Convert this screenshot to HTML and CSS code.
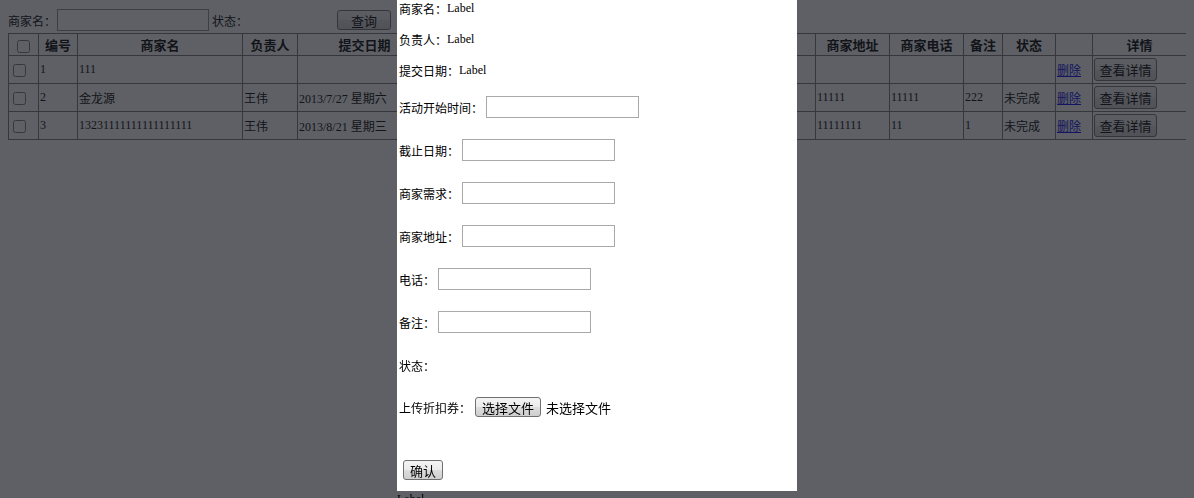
FILE: index.html
```html
<!DOCTYPE html>
<html lang="zh-CN">
<head>
<meta charset="utf-8">
<title>商家管理</title>
<link rel="stylesheet" href="styles.css">
</head>
<body>
<div class="page">
  <div class="toolbar">
    <span class="lbl">商家名：</span><input class="search" type="text"><span class="lbl status-lbl">状态：</span><button class="btn btn-query">查询</button>
  </div>
  <table class="grid">
    <colgroup>
      <col class="c-cb"><col class="c-no"><col class="c-name"><col class="c-owner"><col class="c-date"><col class="c-mid"><col class="c-mid"><col class="c-mid"><col class="c-addr"><col class="c-addr"><col class="c-note"><col class="c-state"><col class="c-del"><col class="c-detail">
    </colgroup>
    <thead>
      <tr>
        <th><input type="checkbox"></th><th>编号</th><th>商家名</th><th>负责人</th><th>提交日期</th><th>活动开始时间</th><th>截止日期</th><th>商家需求</th><th>商家地址</th><th>商家电话</th><th>备注</th><th>状态</th><th></th><th>详情</th>
      </tr>
    </thead>
    <tbody>
      <tr>
        <td><input type="checkbox"></td><td>1</td><td>111</td><td></td><td></td><td></td><td></td><td></td><td></td><td></td><td></td><td></td><td><a href="#">删除</a></td><td><button class="btn btn-detail">查看详情</button></td>
      </tr>
      <tr>
        <td><input type="checkbox"></td><td>2</td><td>金龙源</td><td>王伟</td><td>2013/7/27 星期六</td><td>2013/7/28</td><td>2013/8/1</td><td>11111</td><td>11111</td><td>11111</td><td>222</td><td>未完成</td><td><a href="#">删除</a></td><td><button class="btn btn-detail">查看详情</button></td>
      </tr>
      <tr>
        <td><input type="checkbox"></td><td>3</td><td>13231111111111111111</td><td>王伟</td><td>2013/8/21 星期三</td><td>2013/8/22</td><td>2013/9/1</td><td>111</td><td>11111111</td><td>11</td><td>1</td><td>未完成</td><td><a href="#">删除</a></td><td><button class="btn btn-detail">查看详情</button></td>
      </tr>
    </tbody>
  </table>
</div>
<div class="overlay"></div>
<div class="dialog">
  <div class="panel">
    <div class="line"><span class="lbl">商家名：</span><span>Label</span></div>
    <div class="line"><span class="lbl">负责人：</span><span>Label</span></div>
    <div class="line"><span class="lbl">提交日期：</span><span>Label</span></div>
    <div class="field field-first"><span class="lbl">活动开始时间：</span><input class="text-input" type="text"></div>
    <div class="field"><span class="lbl">截止日期：</span><input class="text-input" type="text"></div>
    <div class="field"><span class="lbl">商家需求：</span><input class="text-input" type="text"></div>
    <div class="field"><span class="lbl">商家地址：</span><input class="text-input" type="text"></div>
    <div class="field"><span class="lbl">电话：</span><input class="text-input" type="text"></div>
    <div class="field"><span class="lbl">备注：</span><input class="text-input" type="text"></div>
    <div class="line line-status"><span class="lbl">状态：</span></div>
    <div class="field field-upload"><span class="lbl">上传折扣券：</span><button class="btn btn-file">选择文件</button><span class="no-file">未选择文件</span></div>
    <div class="submit-row"><button class="btn btn-ok">确认</button></div>
  </div>
  <div class="tail">Label</div>
</div>
</body>
</html>
```
FILE: styles.css
```css
html, body {
  background: #ffffff;
}
body {
  margin: 8px;
  font-family: "Liberation Serif", "Noto Sans CJK SC", serif;
  font-size: 12px;
  color: #000;
}
.lbl {
  font-family: "Noto Sans CJK SC", sans-serif;
  font-size: 12px;
  white-space: nowrap;
}
.btn {
  box-sizing: border-box;
  margin: 0;
  padding: 0;
  border: 1px solid #707070;
  border-radius: 3px;
  background: linear-gradient(#f4f4f4, #ebebeb 50%, #dddddd 51%, #cfcfcf);
  font-family: "Noto Sans CJK SC", sans-serif;
  font-size: 13px;
  color: #000;
  line-height: 1;
}

/* toolbar */
.toolbar {
  display: flex;
  align-items: center;
  height: 24px;
  margin-bottom: 1px;
}
.search {
  box-sizing: border-box;
  width: 152px;
  height: 22px;
  margin: 0 0 0 1px;
  padding: 0;
  border: 1px solid #8f8f8f;
  background: #fff;
}
.status-lbl { margin-left: 3px; }
.btn-query {
  margin-left: 89px;
  width: 54px;
  height: 20px;
}

/* grid */
.grid {
  width: 1178px;
  table-layout: fixed;
  border-collapse: collapse;
  border: 1px solid #777;
}
.c-cb { width: 30px; }
.c-no { width: 39px; }
.c-name { width: 165px; }
.c-owner { width: 55px; }
.c-date { width: 134px; }
.c-mid { width: 128px; }
.c-addr { width: 74px; }
.c-note { width: 39px; }
.c-state { width: 53px; }
.c-del { width: 37px; }
.c-detail { width: 94px; }
.grid th, .grid td {
  border: 1px solid #777;
  padding: 0 1px;
  white-space: nowrap;
  overflow: hidden;
}
.grid thead tr { height: 22px; }
.grid tbody tr { height: 28px; }
.grid th {
  font-family: "Noto Sans CJK SC", sans-serif;
  font-size: 13px;
  font-weight: bold;
  text-align: center;
}
.grid td {
  text-align: left;
  vertical-align: middle;
}
.grid input[type="checkbox"] {
  width: 13px;
  height: 13px;
  vertical-align: middle;
}
.grid th input[type="checkbox"] { margin: 0; }
.grid td input[type="checkbox"] { margin: 0 0 0 3px; }
.grid a {
  color: #0000ee;
  text-decoration: underline;
  font-family: "Noto Sans CJK SC", sans-serif;
}
.btn-detail {
  width: 63px;
  height: 23px;
  margin-left: 0;
  vertical-align: middle;
}

/* overlay + dialog */
.overlay {
  position: fixed;
  inset: 0;
  background: rgba(25, 29, 35, 0.7);
  z-index: 1;
}
.dialog {
  position: absolute;
  left: 397px;
  top: 0;
  width: 400px;
  z-index: 2;
}
.panel {
  box-sizing: border-box;
  height: 491px;
  padding: 0 2px;
  background: #fff;
  display: flex;
  flex-direction: column;
}
.line {
  display: flex;
  align-items: center;
  height: 16px;
  margin-top: 15px;
  white-space: nowrap;
}
.line:first-child { margin-top: 0; }
.field {
  display: flex;
  align-items: center;
  gap: 3px;
  height: 22px;
  margin-top: 21px;
}
.field-first { margin-top: 18px; }
.line-status { margin-top: 24px; }
.field-upload {
  margin-top: 23px;
  gap: 4px;
}
.text-input {
  box-sizing: border-box;
  width: 153px;
  height: 22px;
  margin: 0;
  padding: 1px 2px;
  border: 1px solid #a9a9a9;
  background: #fff;
}
.btn-file {
  width: 66px;
  height: 20px;
}
.no-file {
  margin-left: 1px;
  font-family: "Noto Sans CJK SC", sans-serif;
  font-size: 13px;
}
.submit-row {
  display: flex;
  margin-top: 42px;
  height: 20px;
  padding-left: 4px;
}
.btn-ok {
  width: 40px;
  height: 20px;
}
.tail {
  margin-top: 1px;
  line-height: 15px;
}
```
